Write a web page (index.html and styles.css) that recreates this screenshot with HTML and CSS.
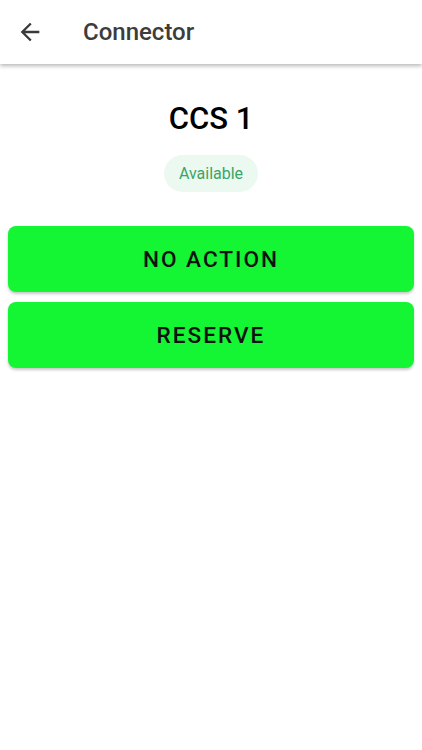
FILE: index.html
```html
<!DOCTYPE html>
<html>
<head>
<meta charset="utf-8">
<link rel="stylesheet" href="styles.css">
</head>
<body>
<header class="appbar">
  <button class="back" aria-label="Back">
    <svg width="28" height="28" viewBox="0 0 24 24"><path d="M20 11H7.83l5.59-5.59L12 4l-8 8 8 8 1.41-1.41L7.83 13H20v-2z" fill="#3a3a3a"/></svg>
  </button>
  <h1 class="title">Connector</h1>
</header>
<main class="content">
  <h2 class="name">CCS 1</h2>
  <div class="chip-row"><span class="chip">Available</span></div>
  <div class="actions">
    <button class="action">NO ACTION</button>
    <button class="action">RESERVE</button>
  </div>
</main>
</body>
</html>
```
FILE: styles.css
```css
* { box-sizing: border-box; }
html, body { margin: 0; padding: 0; background: #fff; }
body { font-family: Roboto, "Noto Sans", sans-serif; width: 422px; height: 750px; overflow: hidden; }
.appbar {
  height: 64px;
  display: flex;
  align-items: center;
  background: #fff;
  box-shadow: 0 2px 4px rgba(0,0,0,0.28);
  position: relative;
}
.back {
  border: 0; background: none; padding: 0;
  width: 28px; height: 28px;
  margin-left: 16px;
  display: flex;
}
.title {
  margin: 0 0 0 39px;
  font-size: 24px;
  font-weight: 500;
  color: #3c3c3c;
}
.content { padding: 0 8px; }
.name {
  margin: 0;
  padding-top: 36px;
  text-align: center;
  font-size: 31px;
  font-weight: 500;
  color: #000;
  line-height: 38px;
}
.chip-row { display: flex; justify-content: center; margin-top: 17px; }
.chip {
  background: #ecf9f0;
  color: #3aa568;
  font-size: 16px;
  height: 37px;
  line-height: 37px;
  padding: 0 15px;
  border-radius: 19px;
}
.actions { display: flex; flex-direction: column; gap: 10px; margin-top: 34px; }
.action {
  height: 66px;
  border: 0;
  border-radius: 8px;
  background: #14f534;
  color: #111;
  font-family: Roboto, sans-serif;
  font-size: 22.6px;
  font-weight: 500;
  letter-spacing: 2px;
  box-shadow: 0 2px 3px rgba(0,0,0,0.22);
}
```
